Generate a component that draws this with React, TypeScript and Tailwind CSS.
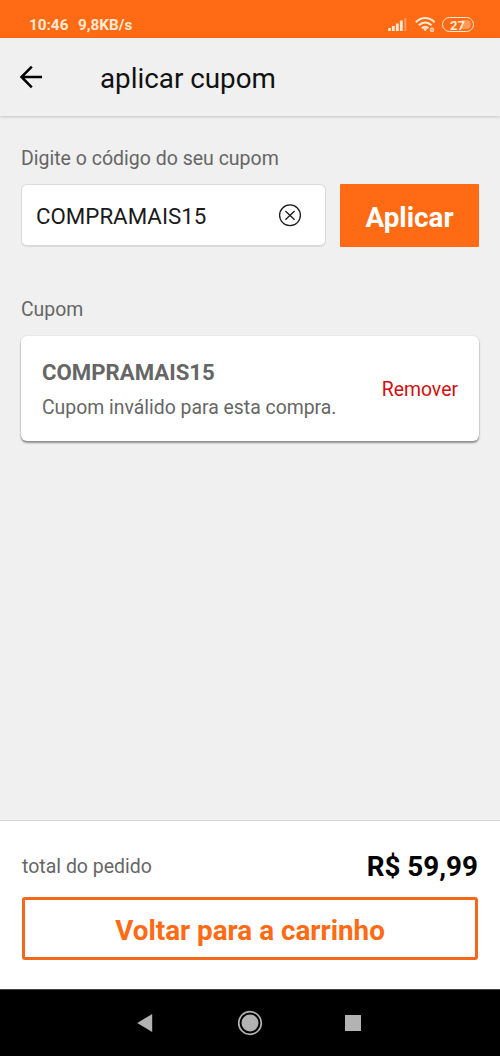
function SignalIcon() {
  return (
    <svg width="20" height="15" viewBox="0 0 20 15" fill="#ffe9d2">
      <rect x="0.2" y="11" width="2.6" height="3" />
      <rect x="3.9" y="9" width="2.8" height="5" />
      <rect x="7.9" y="6.5" width="2.8" height="7.5" />
      <rect x="11.9" y="3.5" width="2.8" height="10.5" />
      <rect x="16.3" y="1" width="2" height="13" opacity="0.4" />
    </svg>
  );
}

function WifiIcon() {
  return (
    <svg width="21" height="17" viewBox="0 0 21 17" fill="none" stroke="#ffe9d2" strokeWidth="2">
      <path d="M0.8 6.2C6 0.6 14.4 0.6 19.6 6.2" />
      <path d="M3.9 9.3C7.5 5.5 12.9 5.5 16.5 9.3" />
      <path d="M6.9 12.2C8.9 10.2 11.5 10.2 13.5 12.2" />
      <path d="M8 12.8L10.2 15.3L12.4 12.8C11.2 11.7 9.2 11.7 8 12.8Z" fill="#ffe9d2" stroke="none" />
      <circle cx="17" cy="13.9" r="1.5" strokeWidth="1.6" opacity="0.8" />
    </svg>
  );
}

function BatteryIcon() {
  return (
    <span className="mt-[1px] ml-[6px] flex h-[15px] w-[32px] rounded-full border-[1.6px] border-[#ffe9d2] p-[2px]">
      <span className="flex flex-1 items-center justify-center rounded-full bg-linear-to-r from-transparent from-65% to-[#ff9a58] to-65% pt-[1px] pr-[1px] text-[13px] leading-[9px] font-bold">
        27
      </span>
    </span>
  );
}

function StatusBar() {
  return (
    <div className="flex h-[38px] shrink-0 items-start bg-[#ff6a14] text-[#ffe9d2]">
      <div className="flex pt-[15px] pl-[29px] text-[15.3px] leading-[20px] font-bold">
        <span className="w-[49px] whitespace-nowrap">10:46</span>
        <span className="whitespace-nowrap">9,8KB/s</span>
      </div>
      <div className="ml-auto flex pt-[16px] pr-[26px]">
        <span className="mt-[1px] mr-[7px]">
          <SignalIcon />
        </span>
        <WifiIcon />
        <BatteryIcon />
      </div>
    </div>
  );
}

function Header() {
  return (
    <header className="z-10 flex h-[78px] shrink-0 items-center bg-[#f0f0f0] shadow-[0_1px_3px_rgba(0,0,0,0.18)]">
      <svg className="ml-[19px]" width="24" height="24" viewBox="0 0 24 24" fill="none" stroke="#000" strokeWidth="2.5">
        <path d="M23 12H3M12.8 1.7L2.5 12L12.8 22.3" />
      </svg>
      <h1 className="ml-[57px] pt-[3px] text-[27.8px] leading-[32px] text-[#111]">aplicar cupom</h1>
    </header>
  );
}

function ClearIcon() {
  return (
    <svg width="24" height="24" viewBox="0 0 24 24" fill="none" stroke="#1a1a1a" strokeWidth="1.3">
      <circle cx="12" cy="12.3" r="10.4" />
      <path d="M7.4 8L16.6 16.8M16.6 8L7.4 16.8" />
    </svg>
  );
}

export default function App() {
  return (
    <div className="flex h-[1056px] w-[500px] flex-col overflow-hidden bg-[#f0f0f0] font-[Roboto,sans-serif]">
      <StatusBar />
      <Header />
      <main className="flex flex-1 flex-col px-[21px] pt-[31px] text-[#666]">
        <p className="text-[19.5px] leading-[24px]">Digite o código do seu cupom</p>
        <div className="mt-[13px] flex h-[63px] gap-[14px]">
          <div className="flex w-[305px] items-center justify-between rounded-[6px] border border-b-2 border-[#dadada] bg-white pr-[23px] pl-[14px]">
            <span className="pt-[2px] text-[22.3px] leading-[26px] text-[#1a1a1a]">COMPRAMAIS15</span>
            <ClearIcon />
          </div>
          <button className="flex flex-1 items-center justify-center rounded-[1px] bg-[#ff6a14] pt-[4px] text-[27.8px] leading-[32px] font-bold text-white">
            Aplicar
          </button>
        </div>
        <p className="mt-[51px] text-[19.4px] leading-[24px]">Cupom</p>
        <section className="mt-[14px] flex h-[105px] items-center justify-between rounded-[6px] bg-white px-[21px] shadow-[0_2px_2px_rgba(0,0,0,0.4),0_0_2px_rgba(0,0,0,0.12)]">
          <div>
            <h2 className="pt-[2px] text-[22.2px] leading-[32px] font-bold">COMPRAMAIS15</h2>
            <p className="mt-[5px] text-[19.4px] leading-[30px]">Cupom inválido para esta compra.</p>
          </div>
          <button className="pt-[2px] text-[19.4px] leading-[24px] text-[#d01010]">Remover</button>
        </section>
      </main>
      <footer className="flex h-[169px] shrink-0 flex-col border-t border-[#d6d6d6] bg-white px-[22px] pt-[30px]">
        <div className="flex h-[32px] items-center justify-between">
          <span className="text-[19.5px] leading-[24px] text-[#666]">total do pedido</span>
          <span className="text-[27.8px] leading-[32px] font-bold text-black">R$ 59,99</span>
        </div>
        <button className="mt-[14px] flex h-[63px] items-center justify-center rounded-[3px] border-3 border-[#f2691c] pt-[4px] text-[27.8px] leading-[32px] font-bold text-[#ff6a14]">
          Voltar para a carrinho
        </button>
      </footer>
      <nav className="flex h-[67px] shrink-0 items-center justify-center gap-[82px] border-t border-[#444] bg-black pr-[3px]">
        <svg width="18" height="20" viewBox="0 0 18 20" fill="#b3b3b3">
          <path d="M0.2 10L15.2 1V19Z" />
        </svg>
        <svg width="26" height="26" viewBox="0 0 26 26">
          <circle cx="13" cy="13" r="11.3" fill="none" stroke="#b3b3b3" strokeWidth="1.7" />
          <circle cx="13" cy="13" r="8.5" fill="#b3b3b3" />
        </svg>
        <span className="size-[16px] bg-[#b3b3b3]" />
      </nav>
    </div>
  );
}
